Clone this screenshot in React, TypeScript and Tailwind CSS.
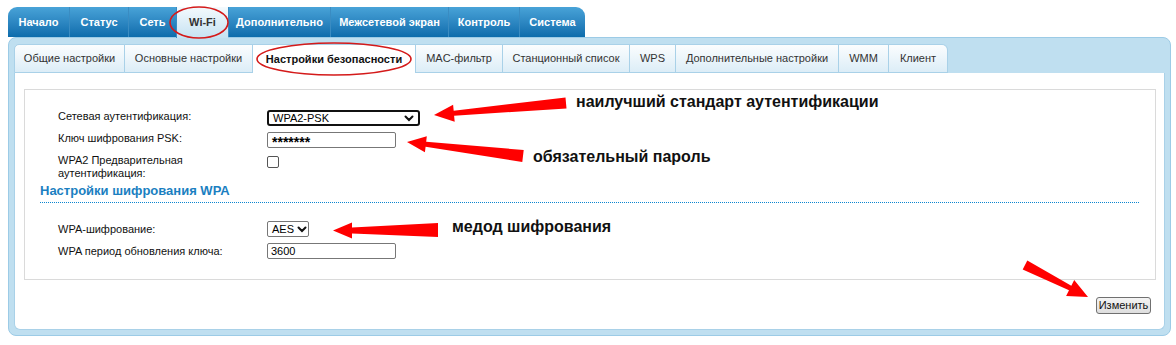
import type { ReactNode } from "react";

/* ---------- data ---------- */
const TOP_TABS = [
  { t: "Начало", w: 61 },
  { t: "Статус", w: 59 },
  { t: "Сеть", w: 48 },
  { t: "Wi-Fi", w: 52, active: true },
  { t: "Дополнительно", w: 102 },
  { t: "Межсетевой экран", w: 118 },
  { t: "Контроль", w: 71 },
  { t: "Система", w: 66 },
];

const SUB_TABS = [
  { t: "Общие настройки", w: 111 },
  { t: "Основные настройки", w: 128 },
  { t: "Настройки безопасности", w: 163, active: true },
  { t: "MAC-фильтр", w: 87 },
  { t: "Станционный список", w: 127 },
  { t: "WPS", w: 46 },
  { t: "Дополнительные настройки", w: 163 },
  { t: "WMM", w: 50 },
  { t: "Клиент", w: 59 },
];

/* ---------- arrow polygon for the red annotations ---------- */
function arrowPoints(
  x1: number,
  y1: number,
  x2: number,
  y2: number,
  tw: number,
  nw: number,
  hl: number,
  hw: number
) {
  const len = Math.hypot(x2 - x1, y2 - y1);
  const dx = (x2 - x1) / len;
  const dy = (y2 - y1) / len;
  const nx = -dy;
  const ny = dx;
  const bx = x2 - dx * hl;
  const by = y2 - dy * hl;
  const p = (x: number, y: number, k: number) =>
    `${(x + nx * k).toFixed(1)},${(y + ny * k).toFixed(1)}`;
  return [
    p(x1, y1, tw / 2),
    p(bx, by, nw / 2),
    p(bx, by, hw / 2),
    `${x2},${y2}`,
    p(bx, by, -hw / 2),
    p(bx, by, -nw / 2),
    p(x1, y1, -tw / 2),
  ].join(" ");
}

function Chevron() {
  return (
    <svg width="10" height="7" viewBox="0 0 10 7" aria-hidden>
      <path d="M1.5 1.5 5 5l3.5-3.5" fill="none" stroke="#111" strokeWidth="2" strokeLinecap="round" />
    </svg>
  );
}

function Row({ label, children }: { label: ReactNode; children: ReactNode }) {
  return (
    <div className="flex items-start pl-[18px]">
      <div className="w-[209px] leading-[13px] text-[#111]">{label}</div>
      {children}
    </div>
  );
}

export default function App() {
  return (
    <div className="relative h-[345px] w-[1176px] overflow-hidden bg-white pl-[8px] pt-[7px] font-['Liberation_Sans',Arial,sans-serif] text-[11px]">
      {/* ---------- top menu ---------- */}
      <nav className="relative flex h-[30px]">
        {TOP_TABS.map((tab, i) => (
          <div
            key={tab.t}
            style={{ width: tab.w }}
            className={`flex items-center justify-center text-[11px] font-bold ${
              tab.active
                ? "relative h-[31px] bg-gradient-to-b from-[#f4fafd] to-[#c6e2f2] text-[#333]"
                : "bg-gradient-to-b from-[#48a3d8] to-[#0b6cac] text-white"
            } ${i > 0 ? "border-l border-[#3a8cc2]" : ""} ${i === 0 ? "rounded-tl-[9px]" : ""} ${
              i === TOP_TABS.length - 1 ? "rounded-tr-[9px]" : ""
            }`}
          >
            {tab.t}
          </div>
        ))}
      </nav>

      {/* ---------- panel ---------- */}
      <div className="w-[1163px] rounded-[8px] border border-[#9ccbe6] bg-[#bfdff0] px-[5px] pb-[5px] pt-[6px]">
        <div className="flex h-[29px]">
          {SUB_TABS.map((tab, i) => (
            <div
              key={tab.t}
              style={{ width: tab.w }}
              className={`flex items-center justify-center border-t border-r border-[#a9d1e8] ${
                i === 0 ? "rounded-tl-[5px] border-l" : ""
              } ${i === SUB_TABS.length - 1 ? "rounded-tr-[6px]" : ""} ${
                tab.active
                  ? "bg-white font-bold text-[#111]"
                  : "border-b bg-gradient-to-b from-[#fbfdfe] to-[#dcedf7] text-[#333]"
              }`}
            >
              {tab.t}
            </div>
          ))}
        </div>

        <div className="rounded-b-[6px] border border-t-0 border-[#a9d1e8] bg-white pb-[15px] pl-[9px] pr-[8px] pt-[16px]">
          <div className="h-[191px] border border-[#dadada] pl-[15px] pr-[16px] pt-[20px]">
            <div className="flex flex-col gap-[6px]">
              <Row label="Сетевая аутентификация:">
                <div className="flex h-[16px] w-[153px] items-center justify-between rounded-[3px] border-2 border-[#111] pl-[4px] pr-[4px] leading-none">
                  WPA2-PSK
                  <Chevron />
                </div>
              </Row>
              <Row label="Ключ шифрования PSK:">
                <div className="flex h-[16px] w-[129px] items-center rounded-[2px] border border-[#777] pl-[4px] pt-[3px] text-[14px] font-bold leading-none">
                  *******
                </div>
              </Row>
              <Row
                label={
                  <>
                    WPA2 Предварительная
                    <br />
                    аутентификация:
                  </>
                }
              >
                <div className="mt-[2px] h-[12px] w-[12px] rounded-[2px] border border-[#555]" />
              </Row>
            </div>

            <div className="mt-[2px] border-b border-dotted border-[#0d86d0] pb-[3px] text-[13px] font-bold leading-[17px] text-[#1b7fc1]">
              Настройки шифрования WPA
            </div>

            <div className="mt-[18px] flex flex-col gap-[6px]">
              <Row label={<span className="leading-[16px]">WPA-шифрование:</span>}>
                <div className="flex h-[16px] w-[42px] items-center gap-[3px] rounded-[2px] border border-[#777] pl-[4px] leading-none">
                  AES
                  <Chevron />
                </div>
              </Row>
              <Row label={<span className="leading-[16px]">WPA период обновления ключа:</span>}>
                <div className="flex h-[16px] w-[129px] items-center rounded-[2px] border border-[#777] pl-[3px] leading-none">
                  3600
                </div>
              </Row>
            </div>
          </div>

          <div className="mt-[17px] flex justify-end pr-[5px]">
            <button className="flex h-[17px] w-[55px] items-center justify-center rounded-[3px] border border-[#707070] bg-gradient-to-b from-[#f4f4f4] to-[#dedede] leading-none text-[#111]">
              Изменить
            </button>
          </div>
        </div>
      </div>

      {/* ---------- red annotations ---------- */}
      <svg className="pointer-events-none absolute inset-0 z-20" width="1176" height="345" aria-hidden>
        <ellipse cx="199" cy="22.5" rx="29" ry="15.5" fill="none" stroke="#d41a1a" strokeWidth="1.6" />
        <ellipse cx="334" cy="59" rx="77" ry="16" fill="none" stroke="#d41a1a" strokeWidth="1.6" />
        <polygon fill="#ff0000" points={arrowPoints(566, 103, 434, 115, 11, 5, 20, 17)} />
        <polygon fill="#ff0000" points={arrowPoints(523, 156, 407, 142, 12, 5, 19, 16)} />
        <polygon fill="#ff0000" points={arrowPoints(438, 230, 333, 230.5, 14, 6, 19, 16)} />
        <polygon fill="#ff0000" points={arrowPoints(1025, 265, 1088, 297, 10, 5, 20, 18)} />
      </svg>
      <span className="absolute left-[576px] top-[93px] text-[16px] font-bold leading-[18px] text-[#111]">
        наилучший стандарт аутентификации
      </span>
      <span className="absolute left-[533px] top-[148px] text-[16px] font-bold leading-[18px] text-[#111]">
        обязательный пароль
      </span>
      <span className="absolute left-[452px] top-[218px] text-[16px] font-bold leading-[18px] text-[#111]">
        медод шифрования
      </span>
    </div>
  );
}
